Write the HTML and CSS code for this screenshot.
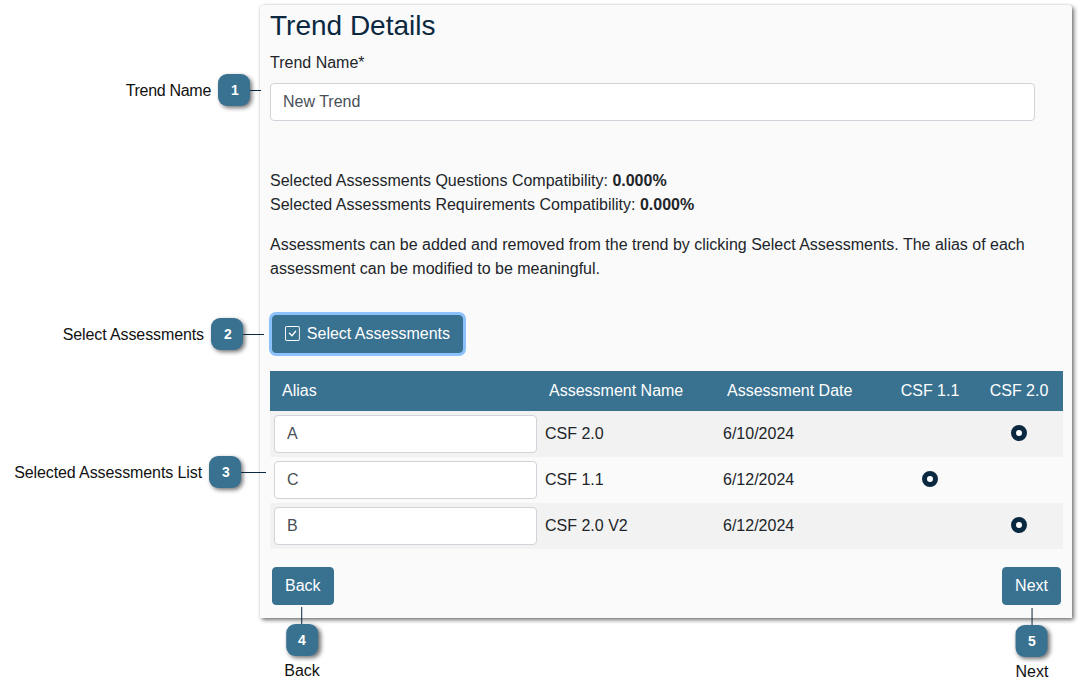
FILE: index.html
```html
<!DOCTYPE html>
<html lang="en">

<head>
    <meta charset="UTF-8">
    <title>Trend Details</title>
    <link rel="stylesheet" href="styles.css">
</head>

<body>
    <main class="panel">
        <h1>Trend Details</h1>
        <label class="field-label" for="trendName">Trend Name*</label>
        <input class="text-input" type="text" id="trendName" value="New Trend">

        <div class="compat">
            <p>Selected Assessments Questions Compatibility: <strong>0.000%</strong></p>
            <p>Selected Assessments Requirements Compatibility: <strong>0.000%</strong></p>
        </div>
        <p class="intro">Assessments can be added and removed from the trend by clicking Select Assessments. The alias of each assessment can be modified to be meaningful.</p>

        <button class="btn btn-select" type="button">
            <svg class="check-icon" viewBox="0 0 16 16" width="16" height="16" fill="currentColor">
                <path d="M14 1a1 1 0 0 1 1 1v12a1 1 0 0 1-1 1H2a1 1 0 0 1-1-1V2a1 1 0 0 1 1-1h12zM2 0a2 2 0 0 0-2 2v12a2 2 0 0 0 2 2h12a2 2 0 0 0 2-2V2a2 2 0 0 0-2-2H2z"/>
                <path d="M10.97 4.97a.75.75 0 0 1 1.07 1.05l-3.99 4.99a.75.75 0 0 1-1.08.02L4.324 8.384a.75.75 0 1 1 1.06-1.06l2.094 2.093 3.473-4.425a.267.267 0 0 1 .02-.022z"/>
            </svg>
            <span>Select Assessments</span>
        </button>

        <table class="assessments">
            <thead>
                <tr>
                    <th class="col-alias">Alias</th>
                    <th class="col-name">Assessment Name</th>
                    <th class="col-date">Assessment Date</th>
                    <th class="col-csf">CSF 1.1</th>
                    <th class="col-csf2">CSF 2.0</th>
                </tr>
            </thead>
            <tbody>
                <tr>
                    <td class="alias-cell"><input class="text-input" type="text" value="A" aria-label="Alias"></td>
                    <td>CSF 2.0</td>
                    <td>6/10/2024</td>
                    <td></td>
                    <td class="dot-cell dot-last"><span class="dot"></span></td>
                </tr>
                <tr>
                    <td class="alias-cell"><input class="text-input" type="text" value="C" aria-label="Alias"></td>
                    <td>CSF 1.1</td>
                    <td>6/12/2024</td>
                    <td class="dot-cell"><span class="dot"></span></td>
                    <td></td>
                </tr>
                <tr>
                    <td class="alias-cell"><input class="text-input" type="text" value="B" aria-label="Alias"></td>
                    <td>CSF 2.0 V2</td>
                    <td>6/12/2024</td>
                    <td></td>
                    <td class="dot-cell dot-last"><span class="dot"></span></td>
                </tr>
            </tbody>
        </table>

        <div class="actions">
            <button class="btn" type="button">Back</button>
            <button class="btn" type="button">Next</button>
        </div>
    </main>

    <!-- callouts lie over the screenshot -->
    <div class="callout callout-1"><span class="callout-text">Trend Name</span><span class="badge">1</span><span class="line"></span></div>
    <div class="callout callout-2"><span class="callout-text">Select Assessments</span><span class="badge">2</span><span class="line"></span></div>
    <div class="callout callout-3"><span class="callout-text">Selected Assessments List</span><span class="badge">3</span><span class="line"></span></div>
    <div class="callout-down callout-4"><span class="line-v"></span><span class="badge">4</span><span class="callout-text">Back</span></div>
    <div class="callout-down callout-5"><span class="line-v"></span><span class="badge">5</span><span class="callout-text">Next</span></div>
</body>

</html>
```
FILE: styles.css
```css
body {
    font-family: "Liberation Sans", Arial, sans-serif;
    font-size: 16px;
    line-height: 24px;
    color: #212529;
    background-color: #fff;
    margin: 0;
    position: relative;
    height: 696px;
    overflow: hidden;
}

.panel {
    box-sizing: border-box;
    width: 812px;
    height: 613px;
    margin: 5px 0 0 260px;
    padding: 4px 9px 0 10px;
    background-color: #fafafa;
    border-radius: 3px 3px 0 0;
    box-shadow: 2px 2px 4px rgba(0, 0, 0, 0.55), 0 0 2px rgba(0, 0, 0, 0.12);
}

h1 {
    font-size: 28px;
    font-weight: 400;
    line-height: 34px;
    color: #0a2840;
    margin: 0 0 8px;
}

.field-label {
    display: block;
    margin-bottom: 8px;
}

.text-input {
    display: block;
    box-sizing: border-box;
    height: 38px;
    width: 765px;
    padding: 6px 12px;
    font-family: inherit;
    font-size: 16px;
    color: #495057;
    background-color: #fff;
    border: 1px solid #ced4da;
    border-radius: 4px;
}

.compat {
    margin-top: 48px;
}

p {
    margin: 0;
}

.intro {
    margin-top: 16px;
}

.btn {
    display: inline-block;
    height: 38px;
    padding: 0 12px;
    font-family: inherit;
    font-size: 16px;
    color: #fff;
    background-color: #397190;
    border: 1px solid #397190;
    border-radius: 4px;
}

.btn-select {
    display: flex;
    align-items: center;
    gap: 7px;
    width: 191px;
    margin: 34px 0 18px 2px;
    padding: 0 12px;
    white-space: nowrap;
    box-shadow: 0 0 0 3px #8cc2fb;
}

.check-icon {
    width: 15px;
    height: 15px;
    margin-top: -2px;
}

.assessments {
    width: 793px;
    table-layout: fixed;
    border-collapse: collapse;
}

.assessments th {
    box-sizing: border-box;
    height: 40px;
    padding: 0 12px;
    font-weight: 400;
    text-align: left;
    white-space: nowrap;
    color: #fff;
    background-color: #397190;
}

.assessments .col-csf,
.assessments .col-csf2 {
    padding: 0;
    text-align: center;
}

.assessments .col-csf2 {
    padding-right: 3px;
}

.col-alias { width: 267px; }
.col-name { width: 178px; }
.col-date { width: 167px; }
.col-csf { width: 96px; }
.col-csf2 { width: 85px; }

.assessments td {
    height: 46px;
    padding: 0 8px;
}

.assessments tbody tr:nth-child(odd) {
    background-color: #f2f2f2;
}

.assessments .alias-cell {
    padding: 0 0 0 4px;
}

.alias-cell .text-input {
    width: 263px;
}

.assessments .dot-cell {
    padding: 0;
}

.assessments .dot-last {
    padding-right: 3px;
}

.dot {
    display: block;
    box-sizing: border-box;
    width: 16px;
    height: 16px;
    margin: -2px auto 0;
    background-color: #fff;
    border: 5px solid #0a2840;
    border-radius: 50%;
}

.actions {
    display: flex;
    justify-content: space-between;
    margin: 18px 2px 0;
}

.callout,
.callout-down {
    position: absolute;
    display: flex;
    align-items: center;
    color: #111;
}

.callout .callout-text {
    margin: 2px 7px 0 0;
    letter-spacing: -0.1px;
    white-space: nowrap;
}

.callout-down {
    flex-direction: column;
    transform: translateX(-50%);
}

.badge {
    flex: none;
    width: 32px;
    height: 32px;
    line-height: 32px;
    font-size: 14px;
    font-weight: 700;
    text-align: center;
    color: #fff;
    background-color: #397190;
    border-radius: 9px;
    box-shadow: 2px 2px 4px rgba(0, 0, 0, 0.55);
}

.callout .badge {
    text-indent: 2px;
}

.line {
    height: 1px;
    background-color: #0a2840;
}

.line-v {
    width: 1px;
    height: 17px;
    background-color: #0a2840;
}

.callout-down .callout-text {
    margin-top: 3px;
}

.callout-1 { right: 820px; top: 74px; }
.callout-1 .callout-text { letter-spacing: -0.3px; }
.callout-1 .line { width: 11px; }
.callout-2 { right: 817px; top: 318px; }
.callout-2 .line { width: 21px; }
.callout-3 { right: 815px; top: 456px; }
.callout-3 .line { width: 25px; }
.callout-4 { left: 302px; top: 607px; }
.callout-5 { left: 1032px; top: 608px; }
```
